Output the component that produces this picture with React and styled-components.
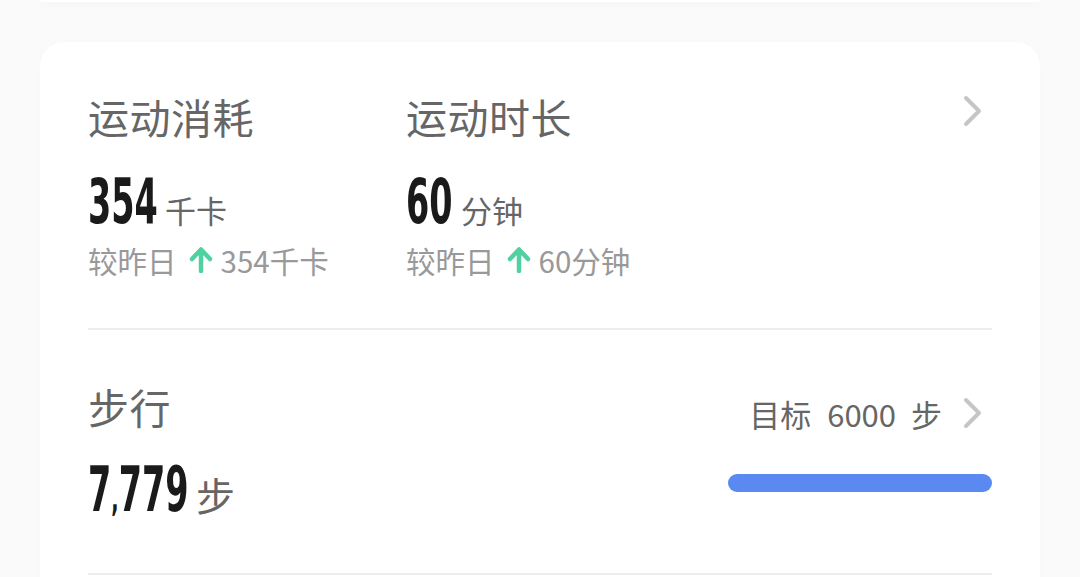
import React from "react";
import styled, { createGlobalStyle } from "styled-components";

const Global = createGlobalStyle`
  html, body { margin: 0; padding: 0; background: #fafafa; }
  body { font-family: "Noto Sans CJK SC", "Noto Sans", sans-serif; overflow: hidden; }
`;

const Page = styled.div`
  width: 1080px;
  height: 577px;
  overflow: hidden;
  background: #fafafa;
`;

const PrevCard = styled.div`
  margin: 0 40px;
  height: 2px;
  background: #fff;
  border-radius: 0 0 24px 24px;
  box-shadow: 0 2px 6px rgba(0, 0, 0, 0.05);
`;

const Card = styled.div`
  margin: 40px 40px 0;
  background: #fff;
  border-radius: 24px;
  padding: 0 48px 60px;
  box-shadow: 0 0 4px rgba(0, 0, 0, 0.015);
`;

const Section = styled.div`
  display: flex;
  align-items: flex-start;
  padding: ${(p) => p.$pad};
  border-bottom: 2px solid #ededed;
`;

const Col = styled.div`
  display: flex;
  flex-direction: column;
  width: ${(p) => p.$w || "auto"};
`;

const Title = styled.div`
  font-size: 41px;
  line-height: 56px;
  color: #666;
  letter-spacing: 0.5px;
`;

const ValueRow = styled.div`
  display: flex;
  align-items: baseline;
  margin-top: ${(p) => p.$mt || "28px"};
  height: 60px;
  line-height: 60px;
`;

const Num = styled.span`
  display: inline-block;
  font-family: "DejaVu Sans Condensed", "DejaVu Sans", sans-serif;
  font-weight: 700;
  font-size: 62px;
  color: #1a1a1a;
  transform: scaleX(0.6);
  transform-origin: left center;
  width: ${(p) => p.$w};
  white-space: nowrap;
`;

const Comma = styled.span`
  font-size: 36px;
`;

const Unit = styled.span`
  font-size: ${(p) => p.$size || "31px"};
  color: #666;
  margin-left: ${(p) => p.$ml || "11px"};
`;

const Compare = styled.div`
  display: flex;
  align-items: center;
  margin-top: 8px;
  height: 40px;
  font-size: 29.5px;
  color: #999;
`;

const Arrow = styled.svg`
  width: 24px;
  height: 28px;
  margin: 0 8px 0 12px;
`;

const Chevron = styled.svg`
  width: 22px;
  height: 32px;
  flex: none;
  margin-right: 8px;
`;

const Spacer = styled.div`
  flex: 1;
`;

const ChevronWrap = styled.div`
  margin-top: ${(p) => p.$mt};
  display: flex;
`;

const RightCol = styled.div`
  display: flex;
  flex-direction: column;
  align-items: flex-end;
  margin-top: 13px;
`;

const GoalRow = styled.div`
  display: flex;
  align-items: center;
  height: 44px;
  font-size: 31px;
  color: #666;
`;

const GoalPart = styled.span`
  margin-right: ${(p) => p.$mr};
`;

const Bar = styled.div`
  margin-top: 39px;
  width: 264px;
  height: 18px;
  border-radius: 9px;
  background: #5b89f2;
`;

const ChevronIcon = () => (
  <Chevron viewBox="0 0 22 32">
    <path d="M4 3 L17 16 L4 29" fill="none" stroke="#c6c6c6" strokeWidth="4" strokeLinecap="round" strokeLinejoin="round" />
  </Chevron>
);

const UpArrow = () => (
  <Arrow viewBox="0 0 24 28">
    <path d="M12 25 V5 M3 13 L12 3.5 L21 13" fill="none" stroke="#4fd1a1" strokeWidth="4.5" strokeLinecap="round" strokeLinejoin="round" />
  </Arrow>
);

export default function App() {
  return (
    <Page>
      <Global />
      <PrevCard />
      <Card>
        <Section $pad="46px 0 48px">
          <Col $w="318px">
            <Title>运动消耗</Title>
            <ValueRow>
              <Num $w="66px">354</Num>
              <Unit>千卡</Unit>
            </ValueRow>
            <Compare>
              较昨日
              <UpArrow />
              354千卡
            </Compare>
          </Col>
          <Col $w="318px">
            <Title>运动时长</Title>
            <ValueRow>
              <Num $w="44px">60</Num>
              <Unit>分钟</Unit>
            </ValueRow>
            <Compare>
              较昨日
              <UpArrow />
              60分钟
            </Compare>
          </Col>
          <Spacer />
          <ChevronWrap $mt="7px">
            <ChevronIcon />
          </ChevronWrap>
        </Section>
        <Section $pad="48px 0 53px">
          <Col>
            <Title>步行</Title>
            <ValueRow $mt="26px">
              <Num $w="99px">
                7<Comma>,</Comma>779
              </Num>
              <Unit $size="39px" $ml="9px">步</Unit>
            </ValueRow>
          </Col>
          <Spacer />
          <RightCol>
            <GoalRow>
              <GoalPart $mr="16px">目标</GoalPart>
              <GoalPart $mr="15px">6000</GoalPart>
              <GoalPart $mr="20px">步</GoalPart>
              <ChevronIcon />
            </GoalRow>
            <Bar />
          </RightCol>
        </Section>
      </Card>
    </Page>
  );
}
